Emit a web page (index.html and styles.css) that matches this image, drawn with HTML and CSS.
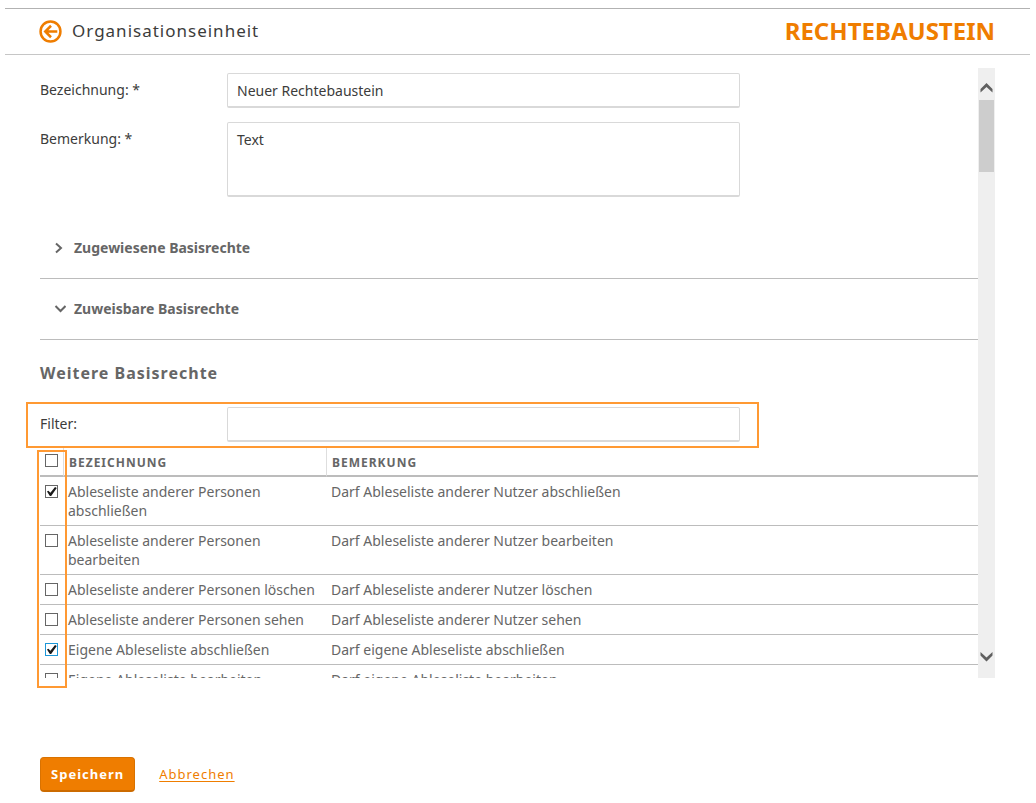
FILE: index.html
```html
<!DOCTYPE html>
<html lang="de">
<head>
<meta charset="utf-8">
<title>Rechtebaustein</title>
<link rel="stylesheet" href="styles.css">
</head>
<body>
<header class="topbar">
  <a class="back" href="#">
    <svg class="back-icon" viewBox="0 0 22 22" aria-hidden="true"><circle cx="11" cy="11" r="9.5"/><path d="M17.500 11H6M11.500 5.500 6 11l5.500 5.500"/></svg>
    <span>Organisationseinheit</span>
  </a>
  <h1 class="title">RECHTEBAUSTEIN</h1>
</header>
<form class="form">
  <div class="panel">
    <div class="content">
      <div class="field">
        <label class="label" for="name">Bezeichnung: *</label>
        <input class="box" id="name" type="text" value="Neuer Rechtebaustein">
      </div>
      <div class="field">
        <label class="label" for="remark">Bemerkung: *</label>
        <textarea class="box box-tall" id="remark">Text</textarea>
      </div>
      <div class="sections">
        <button class="section" type="button" aria-expanded="false">
          <svg class="chevron" viewBox="0 0 12 12" aria-hidden="true"><path d="M2 1.500 7 6 2 10.500"/></svg>Zugewiesene Basisrechte
        </button>
        <button class="section" type="button" aria-expanded="true">
          <svg class="chevron" viewBox="0 0 12 12" aria-hidden="true"><path d="M1.500 3 6.500 8l5-5"/></svg>Zuweisbare Basisrechte
        </button>
      </div>
      <h2 class="subtitle">Weitere Basisrechte</h2>
      <div class="field field-marked">
        <label class="label" for="filter">Filter:</label>
        <input class="box" id="filter" type="text">
      </div>
      <table class="rights">
        <thead>
          <tr><th class="pick"><input class="tick" type="checkbox" aria-label="Alle auswählen"></th><th class="name">BEZEICHNUNG</th><th>BEMERKUNG</th></tr>
        </thead>
        <tbody>
          <tr><td><input class="tick" type="checkbox" id="r1" checked></td><td><label for="r1">Ableseliste anderer Personen abschließen</label></td><td>Darf Ableseliste anderer Nutzer abschließen</td></tr>
          <tr><td><input class="tick" type="checkbox" id="r2"></td><td><label for="r2">Ableseliste anderer Personen bearbeiten</label></td><td>Darf Ableseliste anderer Nutzer bearbeiten</td></tr>
          <tr><td><input class="tick" type="checkbox" id="r3"></td><td><label for="r3">Ableseliste anderer Personen löschen</label></td><td>Darf Ableseliste anderer Nutzer löschen</td></tr>
          <tr><td><input class="tick" type="checkbox" id="r4"></td><td><label for="r4">Ableseliste anderer Personen sehen</label></td><td>Darf Ableseliste anderer Nutzer sehen</td></tr>
          <tr><td><input class="tick tick-active" type="checkbox" id="r5" checked></td><td><label for="r5">Eigene Ableseliste abschließen</label></td><td>Darf eigene Ableseliste abschließen</td></tr>
          <tr><td><input class="tick" type="checkbox" id="r6"></td><td><label for="r6">Eigene Ableseliste bearbeiten</label></td><td>Darf eigene Ableseliste bearbeiten</td></tr>
        </tbody>
      </table>
    </div>
    <div class="scrollbar" aria-hidden="true">
      <svg class="arrow" viewBox="0 0 17 32"><path d="M2.500 21 8.500 15l6 6v3.500L8.500 19 2.500 24.500z"/></svg>
      <div class="track"><div class="thumb"></div></div>
      <svg class="arrow" viewBox="0 0 17 32"><path d="M2.500 6 8.500 11.500 14.500 6v3.500L8.500 15.500 2.500 9.500z"/></svg>
    </div>
    <div class="column-mark"></div>
  </div>
  <div class="actions">
    <button class="save" type="submit">Speichern</button>
    <a class="cancel" href="#">Abbrechen</a>
  </div>
</form>
</body>
</html>
```
FILE: styles.css
```css
* { box-sizing: border-box; }
body {
  margin: 0;
  height: 100vh;
  padding-top: 8px;
  display: flex;
  flex-direction: column;
  background: #fff;
  color: #3c3c3b;
  font: 14px/19px "Noto Sans", sans-serif;
}
input, textarea, button { font: inherit; color: inherit; margin: 0; }
.topbar {
  display: flex;
  align-items: center;
  justify-content: space-between;
  margin: 0 6px 0 5px;
  padding: 0 35px 1px 34px;
  height: 47px;
  border-top: 1px solid #b2b2b2;
  border-bottom: 1px solid #c6c6c6;
}
.back {
  display: flex;
  align-items: center;
  gap: 10px;
  color: inherit;
  text-decoration: none;
  font-size: 17px;
  line-height: 24px;
  letter-spacing: 1px;
}
.back-icon { width: 23px; height: 23px; fill: none; stroke: #ef7d00; stroke-width: 2.400; }
.title { margin: 0; color: #ef7d00; font-size: 24px; line-height: 32px; font-weight: 700; }
.form { flex: 1; min-height: 0; display: flex; flex-direction: column; padding-top: 13px; }
.panel { position: relative; flex: 1; min-height: 0; display: flex; margin-right: 41px; }
.content { flex: 1; min-width: 0; padding: 5px 0 0 40px; overflow-y: auto; scrollbar-width: none; }
.field { display: flex; align-items: flex-start; margin-bottom: 14px; }
.label { width: 187px; flex: none; padding-top: 7px; }
.box {
  flex: 1;
  min-width: 0;
  max-width: 513px;
  height: 35px;
  padding: 0 9px;
  border: 1px solid #d9d9d9;
  border-bottom: 2px solid #d9d9d9;
  border-radius: 2px;
  background: #fff;
  outline: none;
  resize: none;
}
.box-tall { height: 75px; padding-top: 7px; }
.sections { display: flex; flex-direction: column; margin-top: 21px; }
.section {
  display: flex;
  align-items: center;
  gap: 8px;
  padding: 20px 0 21px 14px;
  border: 0;
  border-bottom: 1px solid #bcbcbc;
  background: none;
  color: #666;
  font-weight: 700;
  text-align: left;
}
.chevron { width: 12px; height: 12px; fill: none; stroke: #666; stroke-width: 2; }
.subtitle { margin: 21px 0 17px; color: #666; font-size: 16px; line-height: 24px; letter-spacing: 1px; }
.field-marked { max-width: 733px; margin: 0 0 0 -14px; padding: 3px 17px 4px 12px; border: 2px solid #ff9933; }
.rights { width: 100%; table-layout: fixed; border-spacing: 0; color: #666; }
.rights th {
  padding: 5px 4px 3px 5px;
  border-bottom: 2px solid #bcbcbc;
  text-align: left;
  font-size: 12px;
  letter-spacing: 1px;
}
.rights .pick { width: 24px; padding: 6px 5px 0; border-right: 1px solid #dedede; vertical-align: top; }
.rights .name { width: 263px; border-right: 1px solid #dedede; }
.rights td { padding: 5px 4px; border-bottom: 1px solid #bcbcbc; vertical-align: top; }
.rights td:first-child { padding: 8px 5px 0; }
.tick {
  display: block;
  appearance: none;
  width: 13px;
  height: 13px;
  border: 1px solid #666;
  background: #fff;
}
.tick:checked::before {
  content: "";
  display: block;
  width: 11px;
  height: 11px;
  background: #1a1a1a;
  clip-path: polygon(9% 49%, 22% 43%, 40% 62%, 82% 8%, 98% 18%, 47% 91%, 35% 91%);
}
.tick-active { border-color: #1c97d8; }
.scrollbar { width: 17px; flex: none; display: flex; flex-direction: column; background: #efefef; }
.arrow { width: 17px; height: 32px; fill: #606060; }
.track { flex: 1; padding: 0 1px; }
.thumb { height: 72px; background: #cdcdcd; }
.column-mark {
  position: absolute;
  left: 37px;
  top: 382px;
  bottom: -10px;
  width: 30px;
  border: 2px solid #ff9933;
  pointer-events: none;
}
.actions { display: flex; align-items: center; gap: 24px; padding: 79px 40px 11px; font-size: 13px; letter-spacing: 1px; }
.save {
  height: 35px;
  padding: 0 10px;
  border: 1px solid #d97200;
  border-bottom: 2px solid #cc6b00;
  border-radius: 4px;
  background: #ef7d00;
  color: #fff;
  font-weight: 700;
  letter-spacing: inherit;
}
.cancel { color: #ef7d00; text-underline-offset: 2px; }
```
